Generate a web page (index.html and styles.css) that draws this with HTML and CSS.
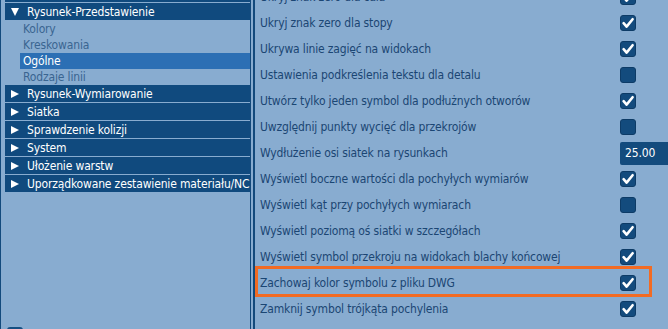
FILE: index.html
```html
<!DOCTYPE html>
<html lang="pl">
<head>
  <meta charset="UTF-8" />
  <title>Ustawienia</title>
  <link rel="stylesheet" href="styles.css">
</head>
<body>
  <div class="window">
    <div class="tree">
      <ul class="tree-list">
        <li class="group"><div class="group-head"></div></li>
        <li class="group open">
          <div class="group-head"><span class="arrow down"></span>Rysunek-Przedstawienie</div>
          <ul class="children">
            <li class="child">Kolory</li>
            <li class="child">Kreskowania</li>
            <li class="child selected">Ogólne</li>
            <li class="child">Rodzaje linii</li>
          </ul>
        </li>
        <li class="group"><div class="group-head"><span class="arrow right"></span>Rysunek-Wymiarowanie</div></li>
        <li class="group"><div class="group-head"><span class="arrow right"></span>Siatka</div></li>
        <li class="group"><div class="group-head"><span class="arrow right"></span>Sprawdzenie kolizji</div></li>
        <li class="group"><div class="group-head"><span class="arrow right"></span>System</div></li>
        <li class="group"><div class="group-head"><span class="arrow right"></span>Ułożenie warstw</div></li>
        <li class="group"><div class="group-head"><span class="arrow right"></span>Uporządkowane zestawienie materiału/NC</div></li>
      </ul>
      <div class="filter"><span class="box"></span>Ukryj filtr</div>
    </div>

    <div class="props">
      <div class="prop-list" id="prop-list"></div>
    </div>
  </div>

  <script>
    const props = [
      ["Ukryj znak zero dla cala", true],
      ["Ukryj znak zero dla stopy", true],
      ["Ukrywa linie zagięć na widokach", true],
      ["Ustawienia podkreślenia tekstu dla detalu", false],
      ["Utwórz tylko jeden symbol dla podłużnych otworów", true],
      ["Uwzględnij punkty wycięć dla przekrojów", false],
      ["Wydłużenie osi siatek na rysunkach", "25.00"],
      ["Wyświetl boczne wartości dla pochyłych wymiarów", true],
      ["Wyświetl kąt przy pochyłych wymiarach", false],
      ["Wyświetl poziomą oś siatki w szczegółach", true],
      ["Wyświetl symbol przekroju na widokach blachy końcowej", true],
      ["Zachowaj kolor symbolu z pliku DWG", true, true],
      ["Zamknij symbol trójkąta pochylenia", true]
    ];

    const list = document.getElementById("prop-list");
    const tick = '<svg viewBox="0 0 16 16" width="16" height="16"><path d="M3.6 8.2 L6.6 11.6 L12.6 4.2" fill="none" stroke="#fff" stroke-width="2.6" stroke-linecap="round" stroke-linejoin="round"/></svg>';

    props.forEach(([label, value, marked]) => {
      const row = document.createElement("div");
      row.className = marked ? "prop marked" : "prop";

      const name = document.createElement("div");
      name.className = "prop-name";
      name.textContent = label;
      row.appendChild(name);

      const ctrl = document.createElement("div");
      ctrl.className = "prop-value";
      if (typeof value === "string") {
        ctrl.innerHTML = `<span class="field">${value}</span>`;
      } else {
        ctrl.innerHTML = `<span class="check">${value ? tick : ""}</span>`;
      }
      row.appendChild(ctrl);
      list.appendChild(row);
    });
  </script>
</body>
</html>
```

FILE: styles.css
```css
html, body {
  margin: 0;
  padding: 0;
}

body {
  width: 668px;
  height: 329px;
  overflow: hidden;
  background: #88acd0;
  font-family: "DejaVu Sans Condensed", "DejaVu Sans", sans-serif;
  font-size: 12px;
  letter-spacing: -0.15px;
}

.window {
  display: flex;
  height: 329px;
}

/* left tree */
.tree {
  width: 245px;
  flex: none;
  display: flex;
  flex-direction: column;
  border-left: 1px solid #134a7c;
  border-right: 1px solid #134a7c;
  padding-left: 4px;
  background: #88acd0;
}

.tree-list, .children {
  list-style: none;
  margin: 0;
  padding: 0;
}

.tree-list {
  margin-top: -15px;
}

.group-head {
  height: 17px;
  margin-bottom: 1px;
  display: flex;
  align-items: center;
  background: #104a7e;
  color: #fff;
  white-space: nowrap;
  overflow: hidden;
}

.arrow {
  width: 9px;
  height: 9px;
  margin: 0 8px 0 5px;
  display: flex;
  align-items: center;
  justify-content: center;
}

.arrow.down::before {
  content: "";
  border-left: 4.5px solid transparent;
  border-right: 4.5px solid transparent;
  border-top: 8px solid #fff;
}

.arrow.right::before {
  content: "";
  border-top: 4px solid transparent;
  border-bottom: 4px solid transparent;
  border-left: 8px solid #fff;
}

.child {
  height: 16px;
  line-height: 16px;
  margin-left: 15px;
  padding-left: 3px;
  color: #3a6591;
}

.child.selected {
  background: #2c6fb4;
  color: #fff;
}

.filter {
  margin-top: auto;
  margin-bottom: -14px;
  display: flex;
  align-items: center;
  gap: 5px;
  height: 16px;
  padding-left: 2px;
  color: #1b4673;
}

.box {
  width: 16px;
  height: 16px;
  border-radius: 3px;
  background: #154f82;
}

/* right property grid */
.props {
  flex: 1;
  margin-left: 2px;
  border-left: 2px solid #134a7c;
  overflow: hidden;
}

.prop-list {
  margin-top: -16px;
}

.prop {
  position: relative;
  height: 26px;
  display: grid;
  grid-template-columns: 365px 1fr;
  align-items: center;
}

.prop-name {
  padding-left: 5px;
  color: #1b4673;
  white-space: nowrap;
}

.prop.marked::after {
  content: "";
  position: absolute;
  top: -4px;
  bottom: -1px;
  left: 0;
  right: 16px;
  border: 3px solid #f26b23;
}

.check {
  width: 16px;
  height: 16px;
  display: block;
  box-sizing: border-box;
  border-radius: 3px;
  background: #134b7d;
  border: 1px solid #0d3b66;
}

.check svg {
  display: block;
  margin: -1px;
}

.field {
  display: block;
  width: 70px;
  height: 23px;
  line-height: 23px;
  box-sizing: border-box;
  padding-left: 5px;
  border-radius: 2px;
  background: #134b7d;
  color: #fff;
}
```
